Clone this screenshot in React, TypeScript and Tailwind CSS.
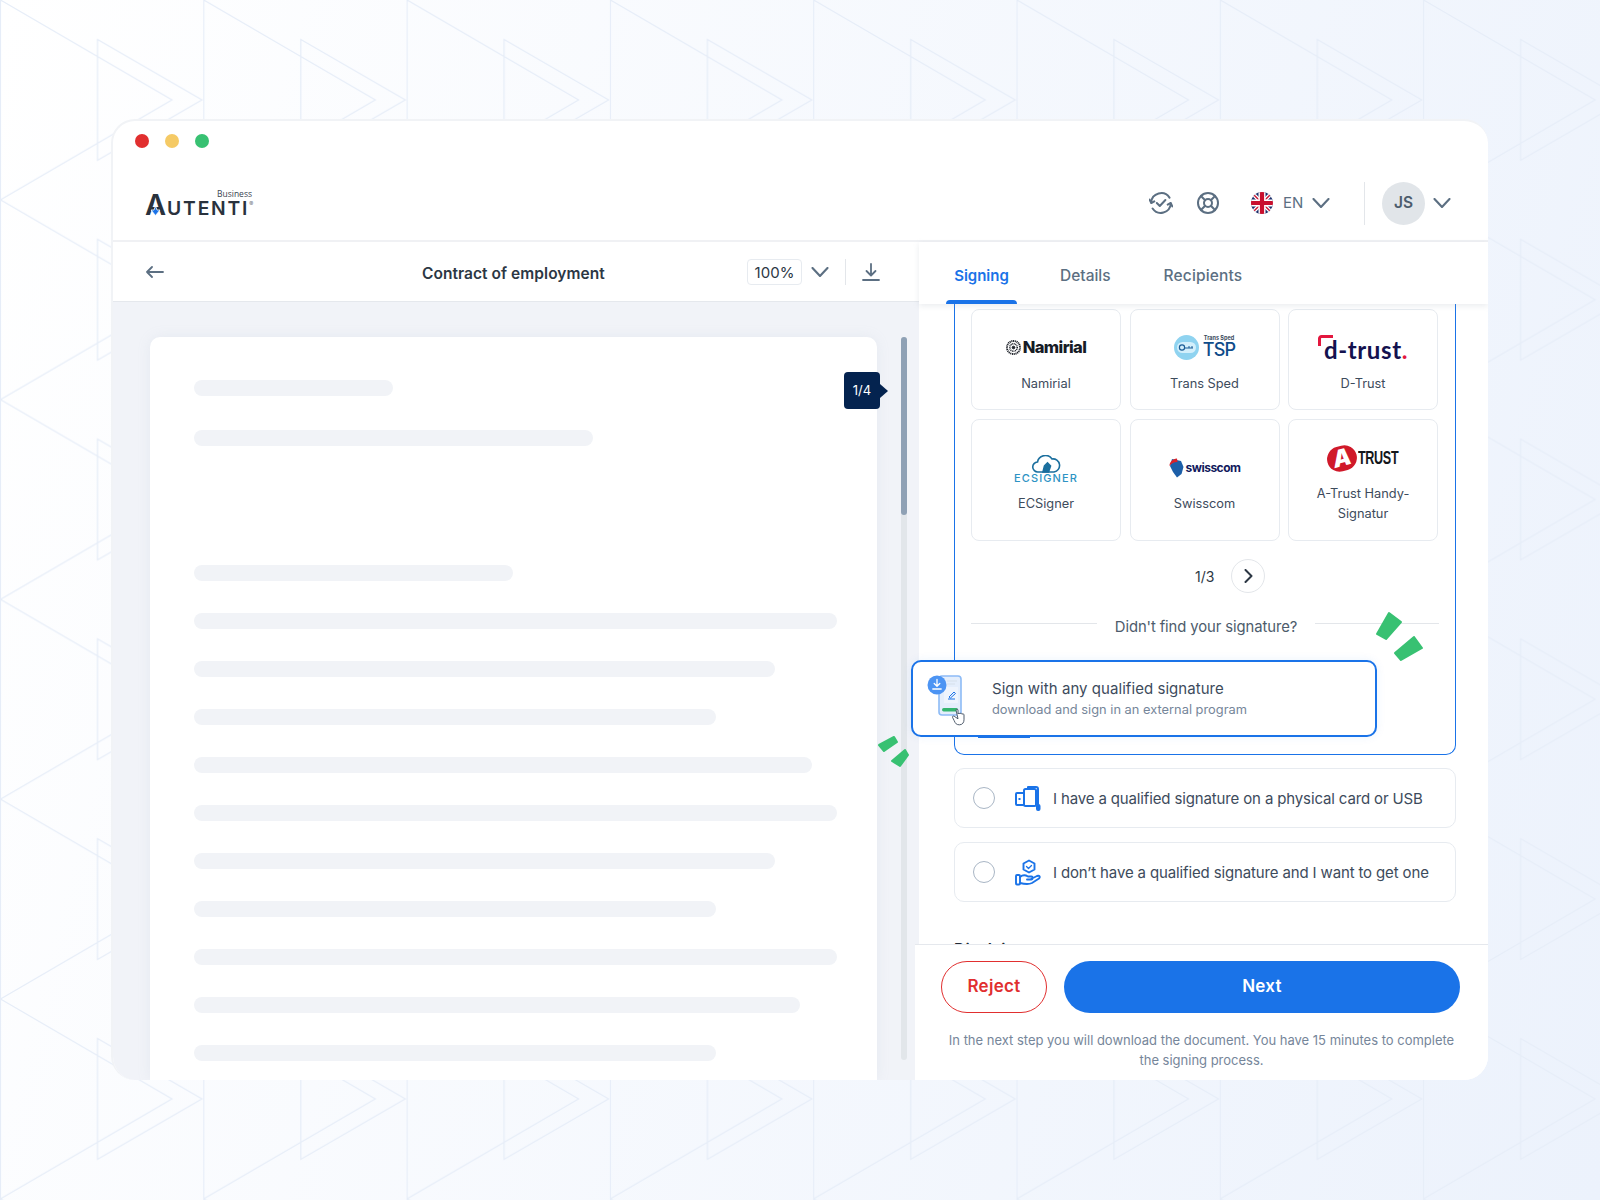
import { LifeBuoy } from 'lucide-react';
import type { ReactNode } from 'react';

const skeletonTop = ['w-[199px]', 'w-[399px]'];
const skeletonBody = ['w-[319px]', 'w-[643px]', 'w-[581px]', 'w-[522px]', 'w-[618px]', 'w-[643px]', 'w-[581px]', 'w-[522px]', 'w-[643px]', 'w-[606px]', 'w-[522px]'];

function Chevron({ className }: { className: string }) {
  return (
    <svg className={className} viewBox="0 0 18 10" fill="none" stroke="#5c6f82" strokeWidth="2.1" strokeLinecap="round" strokeLinejoin="round">
      <path d="M1.5 1 9 9l7.5-8" />
    </svg>
  );
}

function SyncCheck() {
  return (
    <svg className="w-[24px] h-[24px] mr-[23px] shrink-0" viewBox="0 0 24 24" fill="none" stroke="#5c6f82" strokeWidth="2" strokeLinecap="round" strokeLinejoin="round">
      <path d="M2.2 11.5A10 10 0 0 1 20.5 6.600" />
      <path d="M21.800 12.500A10 10 0 0 1 3.600 17.500" />
      <path d="M.6 8.600 2.300 12l3-1.600" />
      <path d="M23.300 15.400 21.700 12l-3 1.600" />
      <path d="m7.800 12 3 3 5.600-6" />
    </svg>
  );
}

function UkFlag() {
  return (
    <svg className="w-[22px] h-[22px] shrink-0" viewBox="0 0 22 22">
      <defs>
        <clipPath id="flag">
          <circle cx="11" cy="11" r="11" />
        </clipPath>
      </defs>
      <g clipPath="url(#flag)">
        <rect width="22" height="22" fill="#1b2f6b" />
        <path d="M0 0 22 22M22 0 0 22" stroke="#fff" strokeWidth="4" />
        <path d="M0 0 22 22M22 0 0 22" stroke="#c8102e" strokeWidth="1.400" />
        <path d="M11 0v22M0 11h22" stroke="#fff" strokeWidth="7" />
        <path d="M11 0v22M0 11h22" stroke="#c8102e" strokeWidth="4.200" />
      </g>
    </svg>
  );
}

function Logo() {
  return (
    <div className="flex flex-col w-[112px] h-[26px] text-[#29323d]">
      <span className="font-['Open_Sans',sans-serif] text-[8.500px] leading-[8px] h-[8px] pl-[72px] whitespace-nowrap text-[#3a4450]">Business</span>
      <div className="relative flex items-baseline h-[18px] -mt-[2px] font-[Inter,sans-serif] font-semibold">
        <span className="text-[29px] leading-[18px]">A</span>
        <span className="ml-[1px] text-[19.300px] leading-[18px] tracking-[1.800px]">UTENTI</span>
        <span className="text-[6px] font-normal leading-[18px] -translate-y-[9px] text-[#6b7480]">®</span>
        <svg className="absolute left-[5px] -bottom-[2px] w-[11px] h-[11px]" viewBox="0 0 11 11">
          <path d="M1 5h3l1.500-4L7 5h3l-4.500 5.500z" fill="#1a73e8" stroke="#fff" strokeWidth=".8" />
        </svg>
      </div>
    </div>
  );
}

function NamirialLogo() {
  return (
    <div className="flex items-center gap-[2px] h-[32px]">
      <svg className="w-[15px] h-[15px]" viewBox="0 0 16 16" fill="none" stroke="#1a1e26">
        <circle cx="8" cy="8" r="7" strokeWidth="2" strokeDasharray="1.200 .7" />
        <circle cx="8" cy="8" r="4" strokeWidth="1.600" strokeDasharray="1 .7" />
        <circle cx="8" cy="8" r="1.400" fill="#1a1e26" />
      </svg>
      <span className="font-[Inter,sans-serif] font-extrabold text-[16.500px] tracking-[-0.6px] text-[#171c26] leading-none">Namirial</span>
    </div>
  );
}

function TspLogo() {
  return (
    <div className="flex items-center gap-[4px] h-[32px]">
      <svg className="w-[25px] h-[25px]" viewBox="0 0 25 25">
        <circle cx="12.500" cy="12.500" r="12.500" fill="#8fd3f0" />
        <rect x="3" y="7" width="19" height="11" rx="5.500" fill="#d3effb" />
        <circle cx="8" cy="12.500" r="2.600" fill="none" stroke="#1b5c96" strokeWidth="1.200" />
        <path d="M11 13h8M15 13v-2M18 13v-2" stroke="#1b5c96" strokeWidth="1" />
      </svg>
      <div className="flex flex-col items-center">
        <span className="font-[Inter,sans-serif] text-[5.500px] font-bold leading-[6px] text-[#3a4a5c]">Trans Sped</span>
        <span className="font-[Inter,sans-serif] text-[18px] font-medium leading-[18px] tracking-[-0.8px] text-[#0f4c8a]">TSP</span>
      </div>
    </div>
  );
}

function DTrustLogo() {
  return (
    <div className="relative flex items-end h-[32px] pl-[6px] pb-[1px]">
      <svg className="absolute left-0 top-[4px] w-[15px] h-[11px]" viewBox="0 0 15 11" fill="none" stroke="#e3173e" strokeWidth="3">
        <path d="M1.500 11V3.500a2 2 0 0 1 2-2H15" />
      </svg>
      <span className="font-[Lato,sans-serif] text-[24px] font-bold leading-[24px] tracking-[0.6px] text-[#14124f]">d-trust<span className="text-[#e3173e]">.</span></span>
    </div>
  );
}

function EcSignerLogo() {
  return (
    <div className="flex flex-col items-center h-[40px] pt-[3px]">
      <svg className="w-[30px] h-[18px]" viewBox="0 0 30 18" fill="none" stroke="#1b6f9e" strokeWidth="1.600">
        <path d="M7 17a5 5 0 0 1-.5-10A8 8 0 0 1 21 4a6.500 6.500 0 0 1 2 13z" />
        <path d="m12 17 1.500-6 3-3 3 3-2 6z" fill="#1b6f9e" />
      </svg>
      <span className="font-[Inter,sans-serif] text-[11px] font-medium tracking-[1.100px] leading-[11px] text-[#2e93c4] whitespace-nowrap">ECSIGNER</span>
    </div>
  );
}

function SwisscomLogo() {
  return (
    <div className="flex items-center gap-[2px] h-[32px]">
      <svg className="w-[15px] h-[20px]" viewBox="0 0 15 20">
        <path d="M3 1 12 3l2.500 6-2 7L8 19.500 4 14 1 8z" fill="#1c5fa8" />
        <path d="M8 .5C3.500 1 .5 4 .5 8c1.500-2 4-4 8-4z" fill="#d8232a" />
      </svg>
      <span className="font-[Inter,sans-serif] text-[12px] font-bold tracking-[-0.5px] leading-none text-[#121a5c]">swisscom</span>
    </div>
  );
}

function ATrustLogo() {
  return (
    <div className="flex items-center h-[32px]">
      <div className="flex items-center justify-center w-[30px] h-[25px] rounded-full bg-[#d0192a] -rotate-[15deg]">
        <span className="font-[Inter,sans-serif] text-[23px] italic font-black leading-none text-white">A</span>
      </div>
      <span className="font-['Liberation_Sans',sans-serif] ml-[1px] w-[41px] text-[18.500px] font-bold tracking-[-0.5px] text-[#14171c] scale-x-[0.68] origin-left">TRUST</span>
    </div>
  );
}

function ProviderCard({ logo, label, pad }: { logo: ReactNode; label: ReactNode; pad: string }) {
  return (
    <div className={`flex flex-col items-center rounded-[8px] border-[1.5px] border-[#e7ebf0] bg-white ${pad}`}>
      {logo}
      <div className="text-center text-[12.800px] leading-[20px] text-[#3d4b5c]">{label}</div>
    </div>
  );
}

function SignatureIllustration() {
  return (
    <svg className="w-[50px] h-[56px] shrink-0 ml-[12px]" viewBox="0 0 50 56" fill="none">
      <rect x="14" y="5" width="22" height="39" rx="3" fill="#e4eefc" stroke="#8dbbf6" strokeWidth="1.600" />
      <path d="M22 10h10M22 13h8" stroke="#d5dfea" strokeWidth="1.200" />
      <rect x="19" y="16" width="14" height="16" fill="#eef4fd" />
      <path d="M23 28h7M24 26l5-5 1.500 1.500-5 4.500z" stroke="#1a73e8" strokeWidth="1" />
      <rect x="17" y="37" width="16" height="3.500" rx="1.700" fill="#34b56f" />
      <circle cx="12" cy="14" r="9.500" fill="#4c94f3" />
      <path d="M12 8.500v6.500M9.200 12.500 12 15.300l2.800-2.800M7.800 18h8.400" stroke="#fff" strokeWidth="1.300" strokeLinecap="round" strokeLinejoin="round" />
      <path d="M31 39c0-1 2-1 2 0v4c0-1 2-1 2 0 0-1 2-1 2 .3 0-.7 2-.7 2 .5v5c0 2.500-1.500 5-4.500 5s-4-1-5.500-4.500l-1.500-3c-.5-1 1-2 2.500-.5l3 2z" fill="#fff" stroke="#3d4b5c" strokeWidth=".9" strokeLinejoin="round" />
    </svg>
  );
}

function CardUsbIcon() {
  return (
    <svg className="w-[26px] h-[26px] shrink-0" viewBox="0 0 26 26" fill="none" stroke="#1a73e8" strokeWidth="2" strokeLinejoin="round">
      <rect x="1" y="8" width="8" height="12" rx="1" />
      <rect x="9" y="4" width="12" height="17" rx="1.500" />
      <path d="M13 4V2h8a2 2 0 0 1 2 2v16" />
      <rect x="22" y="20" width="2.500" height="5" rx="1" fill="#1a73e8" />
      <path d="M3.500 14h2" />
    </svg>
  );
}

function HandShieldIcon() {
  return (
    <svg className="w-[26px] h-[27px] shrink-0" viewBox="0 0 26 27" fill="none" stroke="#1a73e8" strokeWidth="1.900" strokeLinecap="round" strokeLinejoin="round">
      <path d="M14 1.500 19.500 4.500v6L14 13.500l-5.500-3v-6z" />
      <path d="m11.500 7.500 2 2 3-3" strokeWidth="1.300" />
      <rect x="1" y="16" width="4" height="9.500" rx="1" />
      <path d="M5 18c3-2.500 5.500-2 8-.5h3.500c1.500 0 1.500 3 0 3H12M16 20l6-3c2.500-1 3.500 1 2 2.500L17 24c-3 1.500-8 1-12 0" />
    </svg>
  );
}

function OptionRow({ icon, label }: { icon: ReactNode; label: string }) {
  return (
    <div className="flex items-center h-[60px] rounded-[10px] border-[1.5px] border-[#e7ebf0] pl-[18px]">
      <div className="w-[22px] h-[22px] rounded-full border-[1.5px] border-[#a9b6c5] mr-[20px] shrink-0" />
      {icon}
      <span className="ml-[12px] mt-[3px] text-[15px] text-[#3d4b5c] whitespace-nowrap tracking-[-0.14px]">{label}</span>
    </div>
  );
}

export default function App() {
  return (
    <div className="relative w-[1600px] h-[1200px] overflow-hidden bg-linear-105 from-white to-[#ecf2fc] font-[Inter,sans-serif]">
      {/* background triangles */}
      <svg className="absolute inset-0 w-full h-full" fill="none">
        <defs>
          <pattern id="tri" width="203.300" height="199.800" patternUnits="userSpaceOnUse">
            <path d="M.5 0 172 99.900.5 199.800z M97.500 39.500 202 99.900 97.500 160.300z" stroke="#e6edf8" strokeWidth="1.200" />
          </pattern>
        </defs>
        <rect width="1600" height="1200" fill="url(#tri)" />
      </svg>

      <div className="relative pt-[119px] pl-[111px]">
        <div className="flex flex-col w-[1377px] h-[961px] overflow-hidden rounded-[24px] border-t-2 border-l-2 border-[#f1f3f6] bg-white">
          <div className="flex items-center gap-[16px] h-[40px] pl-[22px] shrink-0">
            <div className="w-[14px] h-[14px] rounded-full bg-[#e12f2f]" />
            <div className="w-[14px] h-[14px] rounded-full bg-[#f5ca65]" />
            <div className="w-[14px] h-[14px] rounded-full bg-[#38c172]" />
          </div>

          <div className="flex items-center justify-between h-[81px] pt-[5px] pl-[32px] pr-[37px] border-b-2 border-[#f0f1f4] shrink-0">
            <Logo />
            <div className="flex items-center">
              <SyncCheck />
              <LifeBuoy className="w-[24px] h-[24px] mr-[31px] text-[#5c6f82]" strokeWidth={2} />
              <UkFlag />
              <span className="ml-[10px] w-[20px] text-[15px] text-[#5c6f82]">EN</span>
              <Chevron className="ml-[9px] w-[18px] h-[10px]" />
              <div className="w-px h-[43px] bg-[#e3e6ea] ml-[34px]" />
              <div className="flex items-center justify-center w-[43px] h-[43px] rounded-full bg-[#e1e5e9] ml-[17px] text-[15.500px] font-semibold text-[#4d5c6c]">JS</div>
              <Chevron className="ml-[8px] w-[18px] h-[10px]" />
            </div>
          </div>

          <div className="flex flex-1 min-h-0">
            <div className="flex flex-col w-[806px] shrink-0">
              <div className="flex items-center h-[60px] pl-[33px] border-b border-[#e5e8ed] shrink-0">
                <svg className="w-[18px] h-[12px] shrink-0" viewBox="0 0 18 12" fill="none" stroke="#5c6f82" strokeWidth="1.800" strokeLinecap="round" strokeLinejoin="round">
                  <path d="M1 6h16M6 1 1 6l5 5" />
                </svg>
                <span className="ml-[258px] mt-[4px] w-[183px] text-[15.500px] font-semibold text-[#2c3744] whitespace-nowrap tracking-[0.05px]">Contract of employment</span>
                <div className="flex items-center justify-center ml-[142px] pt-[3px] w-[55px] h-[26px] rounded-[4px] border-[1.5px] border-[#e7ebf0] text-[15px] text-[#2c3744]">100%</div>
                <Chevron className="ml-[9px] w-[18px] h-[10px]" />
                <div className="w-px h-[26px] bg-[#e3e6ea] ml-[16px]" />
                <svg className="w-[18px] h-[18px] ml-[16px]" viewBox="0 0 18 18" fill="none" stroke="#5c6f82" strokeWidth="1.800" strokeLinecap="round" strokeLinejoin="round">
                  <path d="M9 1v11M4.500 8 9 12.500 13.500 8M1 17h16" />
                </svg>
              </div>

              <div className="flex flex-1 min-h-0 bg-[#f1f3f8] pl-[37px] pt-[35px] overflow-hidden">
                <div className="relative w-[727px] rounded-t-[10px] bg-white shadow-[0_0_14px_rgba(160,170,190,0.12)] pt-[43px] pl-[44px] shrink-0">
                  {skeletonTop.map((w, i) => (
                    <div key={i} className={`h-[16px] rounded-full bg-[#f1f3f7] mb-[34px] ${w}`} />
                  ))}
                  <div className="h-[85px]" />
                  <div className="flex flex-col gap-[32px]">
                    {skeletonBody.map((w, i) => (
                      <div key={i} className={`h-[16px] rounded-full bg-[#f1f3f7] ${w}`} />
                    ))}
                  </div>
                  <div className="absolute left-[694px] top-[35px] flex items-center">
                    <div className="flex items-center justify-center w-[36px] h-[37px] rounded-[4px] bg-[#04234f] text-[13px] text-white">1/4</div>
                    <div className="w-0 h-0 border-y-[7px] border-y-transparent border-l-[8px] border-l-[#04234f]" />
                  </div>
                </div>
                <div className="ml-[24px] w-[6px] h-[723px] rounded-full bg-[#e2e6ea] shrink-0">
                  <div className="h-[178px] rounded-full bg-[#8fa1b5]" />
                </div>
              </div>
            </div>

            <div className="relative flex flex-col flex-1 min-w-0">
              <div className="relative z-10 flex items-start h-[62px] shrink-0 pl-[27px] bg-white shadow-[0_2px_6px_rgba(150,160,175,0.2)] text-[15.500px] font-medium text-[#5c6f82]">
                <div className="flex flex-col items-center w-[71px]">
                  <span className="mt-[24px] h-[20px] leading-[20px] text-[15px] font-semibold text-[#1a73e8]">Signing</span>
                  <div className="mt-[14px] w-[71px] h-[4px] rounded-t-[4px] bg-[#1a73e8]" />
                </div>
                <span className="mt-[24px] ml-[43px] leading-[20px]">Details</span>
                <span className="mt-[24px] ml-[53px] leading-[20px] tracking-[0.15px]">Recipients</span>
              </div>

              <div className="flex-1 min-h-0 overflow-hidden pl-[35px]">
                <div className="relative w-[502px] h-[451px] rounded-b-[10px] border-x border-b border-[#1a73e8] pt-[5px] pl-[16px]">
                  <div className="grid grid-cols-[150px_150px_150px] grid-rows-[101px_122px] gap-x-[8.500px] gap-y-[9px]">
                    <ProviderCard pad="pt-[21px]" logo={<NamirialLogo />} label={<div className="mt-[11px]">Namirial</div>} />
                    <ProviderCard pad="pt-[21px]" logo={<TspLogo />} label={<div className="mt-[11px]">Trans Sped</div>} />
                    <ProviderCard pad="pt-[21px]" logo={<DTrustLogo />} label={<div className="mt-[11px]">D-Trust</div>} />
                    <ProviderCard pad="pt-[32px]" logo={<EcSignerLogo />} label={<div className="mt-[2px]">ECSigner</div>} />
                    <ProviderCard pad="pt-[32px]" logo={<SwisscomLogo />} label={<div className="mt-[10px]">Swisscom</div>} />
                    <ProviderCard pad="pt-[22px]" logo={<ATrustLogo />} label={<div className="mt-[10px]">A-Trust Handy-<br />Signatur</div>} />
                  </div>

                  <div className="flex items-center h-[34px] mt-[18px] pl-[224px]">
                    <span className="w-[20px] text-[14px] text-[#2c3744]">1/3</span>
                    <div className="flex items-center justify-center w-[34px] h-[34px] ml-[16px] rounded-full border border-[#e3e6ea]">
                      <svg className="w-[9px] h-[14px]" viewBox="0 0 9 14" fill="none" stroke="#2c3744" strokeWidth="2" strokeLinecap="round" strokeLinejoin="round">
                        <path d="m1.500 1 6 6-6 6" />
                      </svg>
                    </div>
                  </div>

                  <div className="flex items-start h-[20px] mt-[24px]">
                    <div className="w-[126px] h-px mt-[6px] bg-[#e3e6ea]" />
                    <div className="w-[218px] text-center text-[14.850px] leading-[20px] text-[#4d5c6c] tracking-[-0.1px]">Didn't find your signature?</div>
                    <div className="w-[124px] h-px mt-[6px] bg-[#e3e6ea]" />
                  </div>

                  <div className="absolute left-[23px] bottom-[16px] w-[52px] h-[2px] bg-[#1a73e8]" />
                </div>

                <div className="flex flex-col gap-[14px] w-[502px] mt-[13px]">
                  <OptionRow icon={<CardUsbIcon />} label="I have a qualified signature on a physical card or USB" />
                  <OptionRow icon={<HandShieldIcon />} label="I don’t have a qualified signature and I want to get one" />
                </div>

                <div className="mt-[37px] text-[16px] font-semibold leading-[20px] text-[#222b36]">Disclaimer</div>
              </div>

              <div className="relative z-10 -ml-[4px] h-[136px] shrink-0 border-t border-[#e5e8ed] bg-white pt-[16px]">
                <div className="flex gap-[17px] pl-[26px]">
                  <button className="w-[106px] h-[52px] pb-[1px] rounded-full border border-[#e12f2f] text-[17px] font-semibold tracking-[0.3px] text-[#e12f2f]">Reject</button>
                  <button className="w-[396px] h-[52px] pb-[1px] rounded-full bg-[#1a73e8] text-[17px] font-semibold tracking-[0.3px] text-white">Next</button>
                </div>
                <p className="mt-[17px] text-center text-[13px] leading-[20px] text-[#76869a] tracking-[-0.01px]">
                  In the next step you will download the document. You have 15 minutes to complete<br />the signing process.
                </p>
              </div>

              {/* highlighted option lying over the list */}
              <div className="absolute z-20 -left-[8px] top-[418px] flex items-center w-[466px] h-[77px] rounded-[10px] border-2 border-[#1a73e8] bg-white shadow-[0_0_10px_rgba(26,115,232,0.08)]">
                <SignatureIllustration />
                <div className="ml-[17px] pt-[1px]">
                  <div className="text-[15px] leading-[20px] text-[#3d4b5c] tracking-[0.05px]">Sign with any qualified signature</div>
                  <div className="mt-[1px] text-[12.850px] leading-[20px] text-[#76869a]">download and sign in an external program</div>
                </div>
              </div>
            </div>
          </div>
        </div>
      </div>

      {/* green sparks */}
      <svg className="absolute inset-0 z-30 w-full h-full pointer-events-none" fill="#38c172" stroke="#38c172" strokeWidth="2" strokeLinejoin="round">
        <path d="M1389 613 1401 622 1386 639 1377 634z" />
        <path d="M1414 637 1422 648 1401 660 1395 653z" />
        <path d="M894 737 897 742 884 751 879 745z" />
        <path d="M905 750 908 755 900 766 892 761z" />
      </svg>
    </div>
  );
}
